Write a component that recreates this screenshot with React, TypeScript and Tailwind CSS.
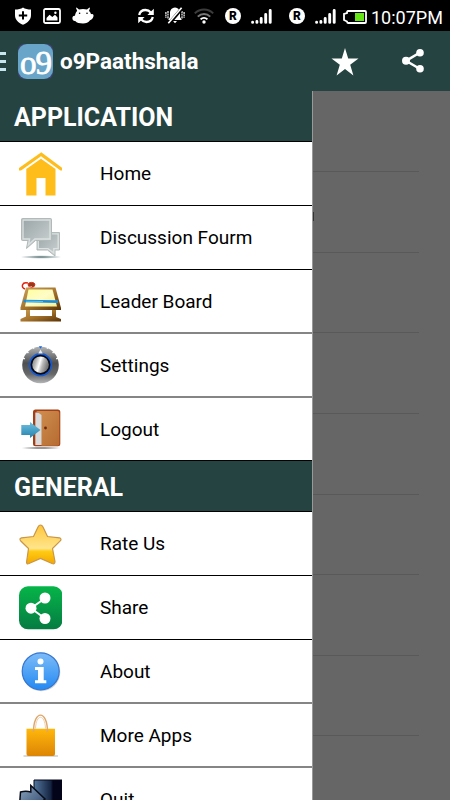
import type { ReactNode } from "react"
import clsx from "clsx"

function ShieldIcon() {
  return (
    <svg width="18" height="18" viewBox="0 0 18 18">
      <path d="M9 0.5 C7 2 4 2.6 1 2.6 V8 C1 12.5 4 15.8 9 17.7 C14 15.8 17 12.5 17 8 V2.6 C14 2.6 11 2 9 .5Z" fill="#fff" />
      <path d="M9 4.2V12.6M4.8 8.4H13.2" stroke="#000" strokeWidth="2" />
    </svg>
  )
}

function PictureIcon() {
  return (
    <svg width="18" height="16" viewBox="0 0 18 16">
      <rect x="1" y="1" width="16" height="14" rx="1.5" fill="none" stroke="#fff" strokeWidth="1.8" />
      <path d="M3.5 12.5V10L6.5 6.8L9.3 9L12 6.8L14.5 9.5V12.5Z" fill="#fff" />
      <circle cx="12.4" cy="4.8" r="1.2" fill="#fff" />
    </svg>
  )
}

function DroidIcon() {
  return (
    <svg width="22" height="17" viewBox="0 0 22 17">
      <path d="M4.6 .4L7 2.6C9.5 1.8 12.5 1.8 15 2.6L17.4 .4L18 .9L17 3.9C18.2 5 18.8 6 19 7.2C21 6.3 22 7.8 21.4 9.6C20.8 11.8 19.5 12.8 18 13.3C16.5 15.5 14 16.5 11 16.5C7.5 16.5 4.8 15.8 3.2 14C1.3 14.2 .2 12.5 .4 10.8C.6 9.2 1.8 8.4 3 8.8C3.2 6.5 4 5 5.2 4L4 .9Z" fill="#fff" />
      <circle cx="7.6" cy="6.2" r=".8" />
      <circle cx="15" cy="6.2" r=".8" />
    </svg>
  )
}

function SyncIcon() {
  return (
    <svg width="18" height="16" viewBox="0 0 18 16" fill="none" stroke="#fff" strokeWidth="2.3">
      <path d="M2.2 7C3 3.4 5.6 2 8.5 2C10.8 2 12.4 2.8 14 4.7" />
      <path d="M15.8 9C15 12.6 12.4 14 9.5 14C7.2 14 5.6 13.2 4 11.3" />
      <path d="M16.8 .8V7H10.4ZM1.2 15.2V9H7.6Z" fill="#fff" stroke="none" />
    </svg>
  )
}

function SilentIcon() {
  return (
    <svg width="20" height="17" viewBox="0 0 20 17">
      <path d="M10 .5C6.2 1 5 3.6 5 6.2V10L3.2 13H16.8L15 10V6.2C15 3.6 13.8 1 10 .5ZM8 14H12L10 16.3Z" fill="#fff" />
      <path d="M3 4V12M17 4V12M.9 5V11M19.1 5V11" stroke="#fff" strokeWidth="1.2" strokeDasharray="2 .6" />
      <path d="M17.3 1L4.3 16.4" stroke="#000" strokeWidth="3.4" />
      <path d="M16.6 .8L3.3 16.2" stroke="#fff" strokeWidth="1.7" />
    </svg>
  )
}

function WifiIcon() {
  return (
    <svg width="20" height="16" viewBox="0 0 20 16" fill="none" strokeWidth="2">
      <path d="M.8 5.4C6 .2 14 .2 19.2 5.4" stroke="#3c3c3c" />
      <path d="M3.8 8.6C7.4 5 12.6 5 16.2 8.6" stroke="#777" />
      <path d="M6.6 11.4C8.6 9.4 11.4 9.4 13.4 11.4" stroke="#fff" />
      <circle cx="10" cy="14" r="1.7" fill="#fff" />
    </svg>
  )
}

function RoamingIcon() {
  return (
    <span className="flex size-4 items-center justify-center rounded-full bg-white text-[12px] leading-none font-black text-black">
      R
    </span>
  )
}

function SignalIcon() {
  return (
    <svg width="21" height="15" viewBox="0 0 21 15" stroke="#fff" strokeWidth="2.9" strokeLinecap="round">
      <path d="M1.6 13.3V13.4M5.9 12.4V13.4M10.2 9.5V13.4M14.7 5.5V13.4M19.2 1.5V13.4" />
    </svg>
  )
}

function BatteryIcon() {
  return (
    <svg width="24" height="14" viewBox="0 0 24 14">
      <path d="M5 1H22Q23 1 23 2V12Q23 13 22 13H5Q4 13 4 11.5L1 10V4L4 3Q4 1 5 1Z" fill="none" stroke="#fff" strokeWidth="1.8" />
      <rect x="12" y="3" width="9" height="8" fill="#65e416" />
    </svg>
  )
}

function HomeIcon() {
  return (
    <svg width="44" height="44" viewBox="0 0 44 44" fill="#ffbd1b">
      <path d="M23 0.4L1 16V18.5H3L23 4.2L42.5 18.5H44V15.8L24.2 1Q23.5 .2 23 .4Z" />
      <path d="M23 6.8L37.5 17V43.6H27.5V26H18.5V43.6H8.3V17Z" />
    </svg>
  )
}

function ChatIcon() {
  return (
    <svg width="44" height="44" viewBox="0 0 44 44">
      <defs>
        <linearGradient id="chat" x2="1" y2="1">
          <stop stopColor="#98a4a6" />
          <stop offset="1" stopColor="#cfd4d4" />
        </linearGradient>
        <radialGradient id="chatShadow">
          <stop stopColor="#4d6a6e" />
          <stop offset="1" stopColor="#60787b" stopOpacity="0" />
        </radialGradient>
      </defs>
      <ellipse cx="23" cy="41" rx="21" ry="1.8" fill="url(#chatShadow)" />
      <path d="M19 16.5H41.5V34H37V40L29.5 34H19Z" fill="url(#chat)" stroke="#b3baba" />
      <path d="M20.3 17.8H40.2V32.7H35.8V37L30 32.7H20.3Z" fill="none" stroke="#dde1e1" strokeWidth="1.3" />
      <path d="M4.5 2.5H32.5Q33.5 2.5 33.5 3.5V23.5Q33.5 24.5 32.5 24.5H17.5L8.5 32.5L10 24.5H4.5Q3.5 24.5 3.5 23.5V3.5Q3.5 2.5 4.5 2.5Z" fill="url(#chat)" stroke="#b2b9b9" />
      <path d="M5 4H32V23H16.8L10.5 28.8L11.6 23H5Z" fill="none" stroke="#dbdfdf" strokeWidth="1.4" />
    </svg>
  )
}

function BoardIcon() {
  return (
    <svg width="44" height="44" viewBox="0 0 44 44">
      <defs>
        <linearGradient id="wood" x2="1" y2="1">
          <stop stopColor="#c9a15c" />
          <stop offset=".5" stopColor="#a7752c" />
          <stop offset="1" stopColor="#5a3206" />
        </linearGradient>
        <linearGradient id="paper" x2="1" y2="1">
          <stop stopColor="#ffff9c" />
          <stop offset=".5" stopColor="#fffcc8" />
          <stop offset="1" stopColor="#f5ef8e" />
        </linearGradient>
      </defs>
      <path d="M8 29H12V37H34V29H38V38L43 40V42.5H2.5V40L8 37.5Z" fill="url(#wood)" />
      <path d="M8 8.5H37.5L43 29V31H2.5V28.5Z" fill="url(#wood)" />
      <path d="M10.5 10.5H34.5L39 27.5H7Z" fill="url(#paper)" />
      <path d="M5.5 22L40 22.6" stroke="#1b8bd8" strokeWidth="2.6" />
      <path d="M8 22.2L25 22.5" stroke="#57c4ef" strokeWidth="1" />
      <path d="M7 10C2.5 8 4 2.5 10 4" fill="none" stroke="#e4220b" strokeWidth="1.4" />
      <ellipse cx="13.5" cy="5.8" rx="3.4" ry="2.4" fill="#8d3c1c" stroke="#df2612" />
      <path d="M10 8.5L14 7.5" stroke="#f3a08e" />
    </svg>
  )
}

function KnobIcon() {
  return (
    <svg width="44" height="44" viewBox="0 0 44 44">
      <defs>
        <linearGradient id="dial" x2="0" y2="1">
          <stop stopColor="#b0b2b4" />
          <stop offset=".45" stopColor="#4c4e50" />
          <stop offset=".75" stopColor="#66686a" />
          <stop offset="1" stopColor="#b5b6b7" />
        </linearGradient>
        <linearGradient id="steel" x2="1" y2=".3">
          <stop stopColor="#777" />
          <stop offset=".3" stopColor="#bbb" />
          <stop offset=".52" stopColor="#fff" />
          <stop offset=".7" stopColor="#bbb" />
          <stop offset="1" stopColor="#777" />
        </linearGradient>
      </defs>
      <circle cx="22.5" cy="22" r="18.3" fill="url(#dial)" />
      <path d="M5 15L9 17M9 8.5L12 11.5M15 4L17 8M30 4L28 8M36 8.5L33 11.5M40 15L36 17" stroke="#fff" strokeWidth="1.4" strokeDasharray="2 9" />
      <circle cx="22.5" cy="21.7" r="10.8" fill="#07090f" stroke="#1659d0" strokeWidth="1.6" />
      <circle cx="22.5" cy="21.7" r="8.3" fill="url(#steel)" />
      <path d="M20.3 10.5L22.5 6.5L24.7 10.5Z" fill="#eee" />
      <path d="M20.8 3.2H24.2L22.5 5.8Z" fill="#1767df" />
    </svg>
  )
}

function DoorIcon() {
  return (
    <svg width="44" height="44" viewBox="0 0 44 44">
      <defs>
        <linearGradient id="door" x2="1" y2="1">
          <stop stopColor="#d08f50" />
          <stop offset="1" stopColor="#b66c31" />
        </linearGradient>
        <linearGradient id="arrow" x2="0" y2="1">
          <stop stopColor="#70c0df" />
          <stop offset="1" stopColor="#2382ae" />
        </linearGradient>
        <radialGradient id="doorShadow">
          <stop offset=".4" stopColor="#999" />
          <stop offset="1" stopColor="#aaa" stopOpacity="0" />
        </radialGradient>
      </defs>
      <ellipse cx="23" cy="41" rx="21" ry="1.4" fill="url(#doorShadow)" />
      <rect x="15" y="2.5" width="27.3" height="36.8" rx="2.5" fill="#a43e14" />
      <rect x="17.3" y="5.5" width="8" height="32.5" fill="#d8dadb" />
      <path d="M18 4L23.5 8V38.7H39.5Q41.3 38.7 41.3 37V6Q41.3 4 39.5 4Z" fill="url(#door)" />
      <circle cx="27.5" cy="21" r="1.4" fill="#70260d" />
      <path d="M3.3 18H12V15L22.5 23L12 31V28H3.3Z" fill="url(#arrow)" />
    </svg>
  )
}

function RateIcon() {
  return (
    <svg width="44" height="44" viewBox="0 0 44 44">
      <defs>
        <linearGradient id="gold" x2="0" y2="1">
          <stop stopColor="#ffc63a" />
          <stop offset=".6" stopColor="#ffe58c" />
          <stop offset=".68" stopColor="#ffcb13" />
          <stop offset="1" stopColor="#f3a700" />
        </linearGradient>
      </defs>
      <path
        d="M22.5 3Q24 3 25 5L29.5 14.5L41.5 15.8Q44.2 17 42 19.2L34.5 26.5L37 39.5Q37 42.7 34 41.5L22.5 36.5L11 41.5Q8 42.7 8.7 39L10.5 26.5L2.8 19Q.8 16.6 3.5 15.8L15.5 14.5L20 5Q21 3 22.5 3Z"
        fill="url(#gold)"
        stroke="#c9964a"
        strokeWidth="1.2"
      />
    </svg>
  )
}

function ShareTileIcon() {
  return (
    <svg width="44" height="44" viewBox="0 0 44 44">
      <defs>
        <linearGradient id="green" x2="0" y2="1">
          <stop stopColor="#06b549" />
          <stop offset="1" stopColor="#057c42" />
        </linearGradient>
      </defs>
      <rect x="1" y=".3" width="43.5" height="43" rx="9" fill="url(#green)" />
      <path d="M27 12.2L13 22.2L27 32.5" fill="none" stroke="#fff" strokeWidth="2" />
      <g fill="#fff">
        <circle cx="27" cy="12" r="5.5" />
        <circle cx="13" cy="22.2" r="5.5" />
        <circle cx="27" cy="32.5" r="5.5" />
      </g>
    </svg>
  )
}

function InfoIcon() {
  return (
    <svg width="44" height="44" viewBox="0 0 44 44">
      <defs>
        <linearGradient id="blue" x2="0" y2="1">
          <stop stopColor="#7dbcf8" />
          <stop offset="1" stopColor="#2389f2" />
        </linearGradient>
      </defs>
      <circle cx="23.3" cy="23.3" r="19" fill="#d4d4d4" />
      <circle cx="22.7" cy="22.3" r="18.5" fill="url(#blue)" stroke="#3876cf" strokeWidth="1.2" />
      <circle cx="22.5" cy="12.4" r="3" fill="#fff" />
      <path d="M17 18H25.7V31.3H28.3V34.3H17V31.3H20V21H17Z" fill="#fff" />
    </svg>
  )
}

function BagIcon() {
  return (
    <svg width="44" height="44" viewBox="0 0 44 44">
      <defs>
        <linearGradient id="bag" x2="0" y2="1">
          <stop stopColor="#ffb70b" />
          <stop offset="1" stopColor="#dd8505" />
        </linearGradient>
      </defs>
      <path d="M5.5 43H40" stroke="#ccc" strokeWidth="1.5" />
      <path d="M8.5 15.7H37V41Q37 43 35 43H10.5Q8.5 43 8.5 41Z" fill="url(#bag)" />
      <path d="M15.5 19C15.5-3.5 29.5-3.5 29.5 19" fill="none" stroke="#dda76c" strokeWidth="1.4" />
      <path d="M17.5 15.7C18 .5 27 .5 27.5 15.7" fill="none" stroke="#efcfaa" />
    </svg>
  )
}

function QuitIcon() {
  return (
    <svg width="44" height="44" viewBox="0 0 44 44">
      <defs>
        <linearGradient id="night" x2="1">
          <stop stopColor="#53779d" />
          <stop offset=".6" stopColor="#152442" />
          <stop offset=".68" stopColor="#03031a" />
        </linearGradient>
        <linearGradient id="exit" x2="1" y2="1">
          <stop stopColor="#8ba5bf" />
          <stop offset="1" stopColor="#293f66" />
        </linearGradient>
      </defs>
      <path d="M16 2H44V44H16Z" fill="url(#night)" stroke="#050718" />
      <path d="M2.5 14Q8 12.5 12.8 14V7.5L27 21L12.8 33.5V27.5H1.5Z" fill="url(#exit)" stroke="#080b18" strokeWidth="1.5" />
    </svg>
  )
}

type Item = { label: string; icon: ReactNode; row: string }

const crisp = "h-16 border-b border-black"
const soft = "h-16 border-b-2 border-[#858585]"

const application: Item[] = [
  { label: "Home", icon: <HomeIcon />, row: crisp },
  { label: "Discussion Fourm", icon: <ChatIcon />, row: crisp },
  { label: "Leader Board", icon: <BoardIcon />, row: soft },
  { label: "Settings", icon: <KnobIcon />, row: soft },
  { label: "Logout", icon: <DoorIcon />, row: "h-[63px] border-b border-black" },
]

const general: Item[] = [
  { label: "Rate Us", icon: <RateIcon />, row: crisp },
  { label: "Share", icon: <ShareTileIcon />, row: crisp },
  { label: "About", icon: <InfoIcon />, row: soft },
  { label: "More Apps", icon: <BagIcon />, row: soft },
  { label: "Quit", icon: <QuitIcon />, row: crisp },
]

function StatusBar() {
  return (
    <div className="flex h-[31px] items-center bg-black pl-[14px] text-white">
      <ShieldIcon />
      <div className="ml-[11px]"><PictureIcon /></div>
      <div className="ml-[11px]"><DroidIcon /></div>
      <div className="ml-[43px]"><SyncIcon /></div>
      <div className="ml-[10px]"><SilentIcon /></div>
      <div className="ml-[9px]"><WifiIcon /></div>
      <div className="ml-[11px]"><RoamingIcon /></div>
      <div className="ml-[10px] pt-0.5"><SignalIcon /></div>
      <div className="ml-[17px]"><RoamingIcon /></div>
      <div className="ml-[10px] pt-0.5"><SignalIcon /></div>
      <div className="ml-[7px] pt-0.5"><BatteryIcon /></div>
      <span className="ml-[4px] pt-[4px] text-[18px] leading-none whitespace-nowrap">10:07PM</span>
    </div>
  )
}

function ActionBar() {
  return (
    <div className="flex h-[60px] items-center bg-[#254341] text-white">
      <div className="flex w-[6px] flex-col gap-[5px]">
        <span className="h-[3px] bg-[#c7e6ef]" />
        <span className="h-[3px] bg-[#c7e6ef]" />
        <span className="h-[3px] bg-[#c7e6ef]" />
      </div>
      <div className="ml-3 size-[35px] rounded-[6px] bg-[#414578]">
        <div className="flex size-full items-center justify-center rounded-[9px] bg-[#69a5c9] pt-[3px] font-['Liberation_Serif'] text-[33px] leading-[32px] tracking-[-1px] [-webkit-text-stroke:0.8px_white]">
          o9
        </div>
      </div>
      <h1 className="ml-[7px] w-[271px] pt-px text-[22.5px] leading-none font-bold">o9Paathshala</h1>
      <svg className="mt-0.5 shrink-0" width="28" height="28" viewBox="0 0 28 28">
        <path d="M14 0L17.2 10.4H27.5L19.2 16.8L22.4 27.5L14 21L5.6 27.5L8.8 16.8L.5 10.4H10.8Z" fill="#fff" />
      </svg>
      <svg className="ml-[42px] shrink-0" width="24" height="26" viewBox="0 0 24 26" fill="#fff">
        <path d="M19 4.5L5 12.8L19 21" fill="none" stroke="#fff" strokeWidth="2.5" />
        <circle cx="19" cy="4.7" r="3.8" />
        <circle cx="5" cy="12.8" r="4" />
        <circle cx="19" cy="20.8" r="3.8" />
      </svg>
    </div>
  )
}

function Section({ title, items }: { title: string; items: Item[] }) {
  return (
    <section>
      <h2 className="flex h-[51px] items-center border-b border-black bg-[#254341] pt-[3px] pl-[14px] text-[25px] font-bold text-white">
        {title}
      </h2>
      {items.map((item) => (
        <div key={item.label} className={clsx("flex items-center bg-white pl-[18px]", item.row)}>
          {item.icon}
          <span className="ml-[38px] pt-px text-[19px] leading-6 text-black">{item.label}</span>
        </div>
      ))}
    </section>
  )
}

export default function App() {
  return (
    <div className="h-[800px] w-[450px] overflow-hidden bg-[#666] font-['Roboto',sans-serif]">
      <StatusBar />
      <ActionBar />
      <div className="flex h-[709px] overflow-hidden">
        <nav className="w-[313px] shrink-0 border-r border-[#999]">
          <Section title="APPLICATION" items={application} />
          <Section title="GENERAL" items={general} />
        </nav>
        <div className="w-[106px] pt-[0.6px]">
          {Array.from({ length: 8 }, (_, i) => (
            <div key={i} className="relative h-[80.6px] border-b border-[#595959]">
              {/* end of a row title left visible next to the drawer */}
              {i === 1 && <span className="absolute top-[40px] left-0 h-[9px] w-px bg-[#333]" />}
            </div>
          ))}
        </div>
      </div>
    </div>
  )
}
